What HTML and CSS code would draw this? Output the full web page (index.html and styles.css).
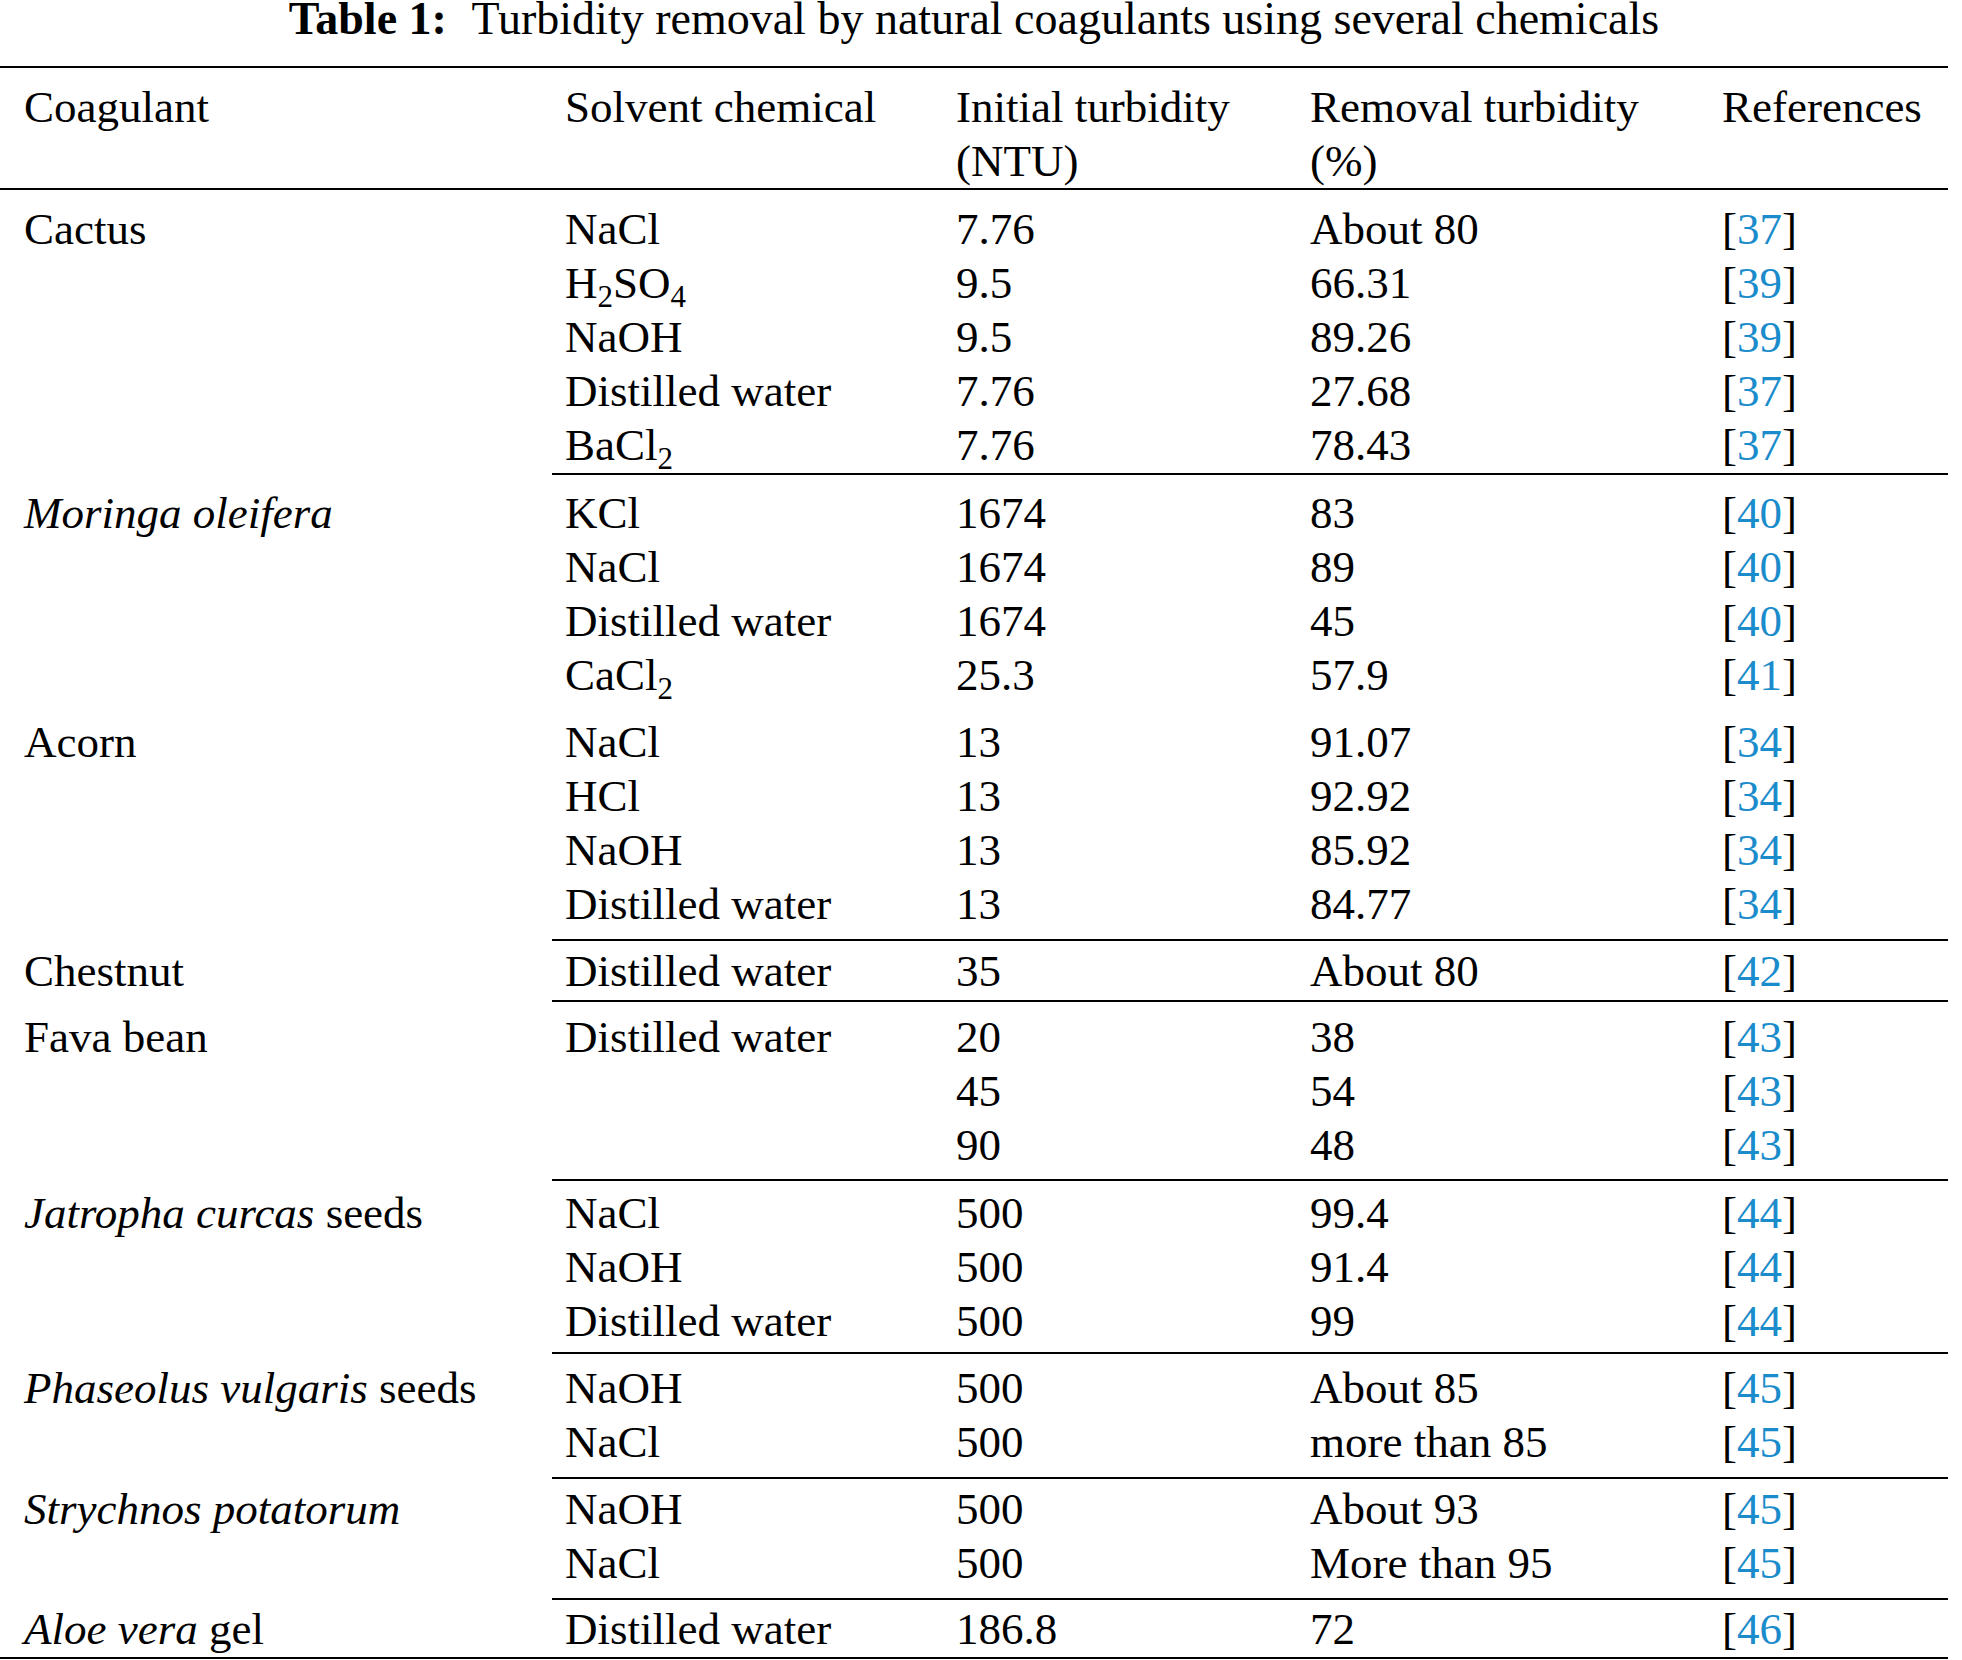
FILE: index.html
```html
<!DOCTYPE html>
<html lang="en">
<head>
<meta charset="utf-8">
<title>Table 1: Turbidity removal by natural coagulants using several chemicals</title>
<link rel="stylesheet" href="styles.css">
</head>
<body>
<div class="page">
  <div class="caption"><strong class="caption-label">Table 1:</strong> Turbidity removal by natural coagulants using several chemicals</div>
  <table class="data">
    <colgroup>
      <col class="c1"><col class="c2"><col class="c3"><col class="c4"><col class="c5">
    </colgroup>
    <thead>
      <tr><th>Coagulant</th><th>Solvent chemical</th><th>Initial turbidity<br>(NTU)</th><th>Removal turbidity<br>(%)</th><th>References</th></tr>
    </thead>
    <tbody class="grp grp-cactus ruled">
      <tr><td class="name" rowspan="5">Cactus</td><td>NaCl</td><td>7.76</td><td>About 80</td><td>[<span class="ref">37</span>]</td></tr>
      <tr><td>H<sub>2</sub>SO<sub>4</sub></td><td>9.5</td><td>66.31</td><td>[<span class="ref">39</span>]</td></tr>
      <tr><td>NaOH</td><td>9.5</td><td>89.26</td><td>[<span class="ref">39</span>]</td></tr>
      <tr><td>Distilled water</td><td>7.76</td><td>27.68</td><td>[<span class="ref">37</span>]</td></tr>
      <tr><td>BaCl<sub>2</sub></td><td>7.76</td><td>78.43</td><td>[<span class="ref">37</span>]</td></tr>
    </tbody>
    <tbody class="grp grp-moringa">
      <tr><td class="name" rowspan="4"><em>Moringa oleifera</em></td><td>KCl</td><td>1674</td><td>83</td><td>[<span class="ref">40</span>]</td></tr>
      <tr><td>NaCl</td><td>1674</td><td>89</td><td>[<span class="ref">40</span>]</td></tr>
      <tr><td>Distilled water</td><td>1674</td><td>45</td><td>[<span class="ref">40</span>]</td></tr>
      <tr><td>CaCl<sub>2</sub></td><td>25.3</td><td>57.9</td><td>[<span class="ref">41</span>]</td></tr>
    </tbody>
    <tbody class="grp grp-acorn ruled">
      <tr><td class="name" rowspan="4">Acorn</td><td>NaCl</td><td>13</td><td>91.07</td><td>[<span class="ref">34</span>]</td></tr>
      <tr><td>HCl</td><td>13</td><td>92.92</td><td>[<span class="ref">34</span>]</td></tr>
      <tr><td>NaOH</td><td>13</td><td>85.92</td><td>[<span class="ref">34</span>]</td></tr>
      <tr><td>Distilled water</td><td>13</td><td>84.77</td><td>[<span class="ref">34</span>]</td></tr>
    </tbody>
    <tbody class="grp grp-chestnut ruled">
      <tr><td class="name">Chestnut</td><td>Distilled water</td><td>35</td><td>About 80</td><td>[<span class="ref">42</span>]</td></tr>
    </tbody>
    <tbody class="grp grp-fava ruled">
      <tr><td class="name" rowspan="3">Fava bean</td><td>Distilled water</td><td>20</td><td>38</td><td>[<span class="ref">43</span>]</td></tr>
      <tr><td></td><td>45</td><td>54</td><td>[<span class="ref">43</span>]</td></tr>
      <tr><td></td><td>90</td><td>48</td><td>[<span class="ref">43</span>]</td></tr>
    </tbody>
    <tbody class="grp grp-jatropha ruled">
      <tr><td class="name" rowspan="3"><em>Jatropha curcas</em> seeds</td><td>NaCl</td><td>500</td><td>99.4</td><td>[<span class="ref">44</span>]</td></tr>
      <tr><td>NaOH</td><td>500</td><td>91.4</td><td>[<span class="ref">44</span>]</td></tr>
      <tr><td>Distilled water</td><td>500</td><td>99</td><td>[<span class="ref">44</span>]</td></tr>
    </tbody>
    <tbody class="grp grp-phaseolus ruled">
      <tr><td class="name" rowspan="2"><em>Phaseolus vulgaris</em> seeds</td><td>NaOH</td><td>500</td><td>About 85</td><td>[<span class="ref">45</span>]</td></tr>
      <tr><td>NaCl</td><td>500</td><td>more than 85</td><td>[<span class="ref">45</span>]</td></tr>
    </tbody>
    <tbody class="grp grp-strychnos ruled">
      <tr><td class="name" rowspan="2"><em>Strychnos potatorum</em></td><td>NaOH</td><td>500</td><td>About 93</td><td>[<span class="ref">45</span>]</td></tr>
      <tr><td>NaCl</td><td>500</td><td>More than 95</td><td>[<span class="ref">45</span>]</td></tr>
    </tbody>
    <tbody class="grp grp-aloe ruled last">
      <tr><td class="name"><em>Aloe vera</em> gel</td><td>Distilled water</td><td>186.8</td><td>72</td><td>[<span class="ref">46</span>]</td></tr>
    </tbody>
  </table>
</div>
</body>
</html>
```

FILE: styles.css
```css
html, body {
  margin: 0;
  padding: 0;
  background: #ffffff;
}

body {
  font-family: "Liberation Serif", "Times New Roman", serif;
  font-size: 45px;
  color: #000000;
}

.page {
  width: 1948px;
}

.caption {
  font-size: 46px;
  text-align: center;
  line-height: 38px;
  height: 38px;
  margin-bottom: 28px;
  white-space: nowrap;
}

.caption-label {
  font-weight: bold;
  margin-right: 14px;
}

.data {
  width: 1948px;
  table-layout: fixed;
  border-collapse: separate;
  border-spacing: 0;
}

.c1 { width: 552px; }
.c2 { width: 391px; }
.c3 { width: 354px; }
.c4 { width: 412px; }
.c5 { width: 239px; }

.data th,
.data td {
  font-weight: normal;
  text-align: left;
  vertical-align: top;
  line-height: 54px;
  padding: 0 0 0 13px;
  white-space: nowrap;
}

.data th:first-child,
.data td.name {
  padding-left: 24px;
}

.data thead th {
  border-top: 2px solid #000;
  border-bottom: 2px solid #000;
  padding-top: 12px;
  padding-bottom: 0;
}

.data sub {
  font-size: 31px;
  line-height: 0;
  vertical-align: -9px;
}

.ref {
  color: #1b8ccb;
}

.grp tr:first-child > td {
  padding-top: var(--pt, 6px);
}

.grp tr:last-child > td {
  padding-bottom: var(--pb, 5px);
}

.grp.ruled tr:last-child > td:not(.name) {
  border-bottom: 2px solid #000;
}

.grp.last tr:last-child > td.name {
  border-bottom: 2px solid #000;
}

.grp-cactus    { --pt: 12px; --pb: 1px; }
.grp-moringa   { --pt: 11px; --pb: 0px; }
.grp-acorn     { --pt: 13px; --pb: 8px; }
.grp-chestnut  { --pt: 3px;  --pb: 2px; }
.grp-fava      { --pt: 8px;  --pb: 7px; }
.grp-jatropha  { --pt: 5px;  --pb: 4px; }
.grp-phaseolus { --pt: 7px;  --pb: 8px; }
.grp-strychnos { --pt: 3px;  --pb: 8px; }
.grp-aloe      { --pt: 2px;  --pb: 1px; }
```
